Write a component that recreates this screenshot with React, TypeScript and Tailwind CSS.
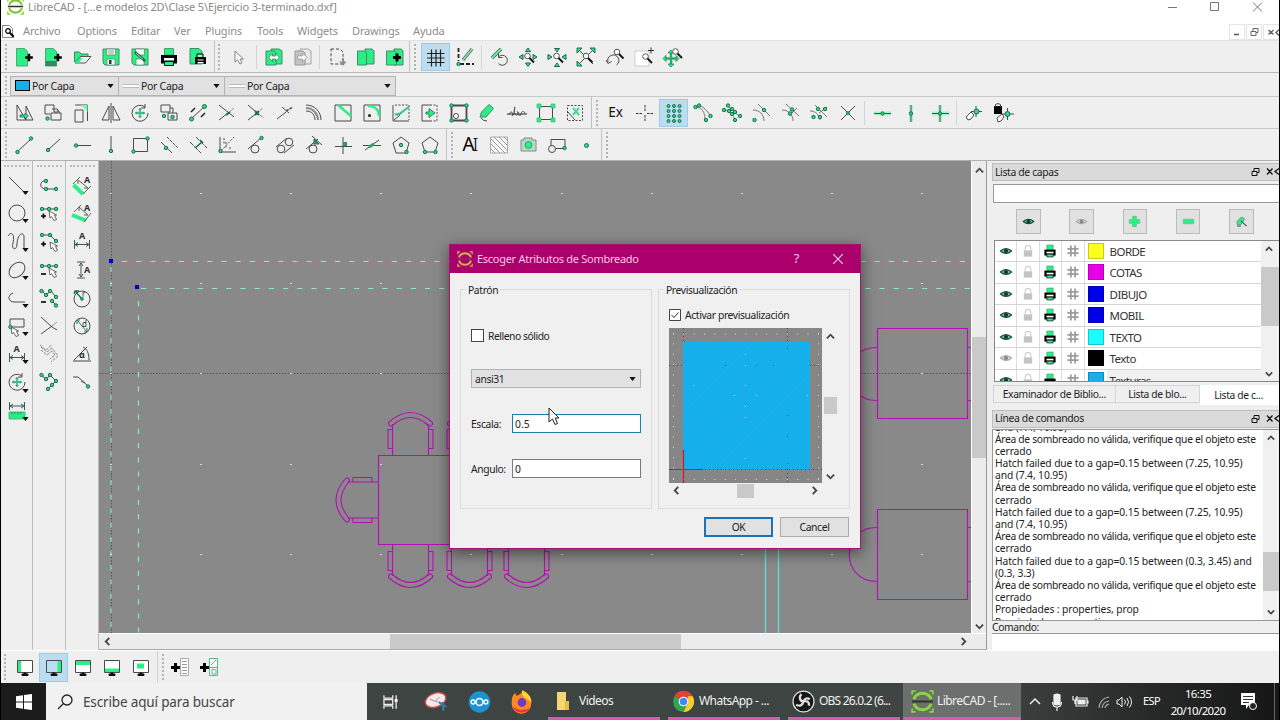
import { ReactNode } from "react";
import clsx from "clsx";

const G = "#2bef86";
const D = "#4a4a4a";

const Dot = ({ x, y, r = 1.7 }: { x: number; y: number; r?: number }) => (
  <circle cx={x} cy={y} r={r} fill="#35d985" stroke="#17714a" strokeWidth="1" />
);

interface LineProps {
  d: string;
  c?: string;
  w?: number;
  f?: string;
  dash?: string;
}

const Line = ({ d, c = D, w = 1, f = "none", dash }: LineProps) => (
  <path d={d} stroke={c} strokeWidth={w} fill={f} strokeDasharray={dash} />
);

const Plus = ({ x, y, r = 3.8, w = 2.4 }: { x: number; y: number; r?: number; w?: number }) => (
  <Line d={`M${x - r} ${y}h${2 * r}M${x} ${y - r}v${2 * r}`} c="#000" w={w} />
);

const Lens = ({ x, y }: { x: number; y: number }) => (
  <>
    <circle cx={x} cy={y} r="2.8" fill="#fff" stroke="#555" />
    <Line d={`M${x + 2} ${y + 2}l4.5 4.5`} c="#111" w={1.8} />
  </>
);

const Hand = ({ x, y }: { x: number; y: number }) => (
  <path
    transform={`translate(${x} ${y})`}
    d="M0 0l1 7 1.5-1.5 2.5 4 2.5-1-2-4.5h2z"
    fill="#fff"
    stroke="#555"
    strokeWidth=".9"
  />
);

const icons: Record<string, ReactNode> = {
  new: (
    <>
      <Line d="M2.500 1.500h8l3 3V19h-11z" c="#4fa878" f={G} />
      <Plus x={15} y={10.5} />
    </>
  ),
  template: (
    <>
      <Line d="M2.500 1.500h8l3 3V19h-11z" c="#4fa878" f={G} />
      <path d="M2.500 14h11v5h-11z" fill="#38885f" />
      <Plus x={15} y={10.5} />
    </>
  ),
  open: (
    <>
      <Line d="M2.500 15V5h5l1.500 2h7v3" c="#38885f" f={G} />
      <Line d="M3 16l5-6.500h11L13.500 16z" c="#555" f="#e9f5ee" />
      <path d="M3 16l5-6 2 1.500L7 16z" fill={G} />
    </>
  ),
  save: (
    <>
      <Line d="M2 2h16v16H4l-2-2z" c="#3d8f63" f={G} />
      <path d="M5.500 2h9v6h-9zM6 12h8v6H6z" fill="#fff" stroke="#5a8f73" strokeWidth=".8" />
      <Line d="M7 4h6M7 6h6" c="#777" w={0.8} />
      <path d="M8 13h2.500v4H8z" fill="#333" />
    </>
  ),
  saveAs: (
    <>
      <Line d="M2 2h16v16H4l-2-2z" c="#3d8f63" f={G} />
      <path d="M5.500 2h9v6h-9zM6 12h8v6H6z" fill="#fff" stroke="#5a8f73" strokeWidth=".8" />
      <Line d="M5 5l10 9" c="#2d5a45" w={2.400} />
      <Line d="M6 6l7 6.500" c="#8df5ba" w={1} />
    </>
  ),
  print: (
    <>
      <path d="M5.500 1.500h9V8h-9z" fill={G} stroke="#38a870" />
      <path d="M2 8h16v8.500H2z" fill="#000" />
      <path d="M5 11h10v2.500H5z" fill="#fff" />
      <path d="M5.500 14.500h9v4h-9z" fill={G} stroke="#111" />
    </>
  ),
  preview: (
    <>
      <Line d="M2 1.500h9l3 3V17H2z" c="#3d8f63" f={G} />
      <path d="M9 7h6v4H9z" fill="#8ff2b8" stroke="#000" />
      <path d="M7 10h11v7H7z" fill="#000" />
      <path d="M9.500 12.500h6v1h-6zM9.500 15h6v1.500h-6z" fill="#fff" />
    </>
  ),
  arrow: <Line d="M7 4v11l2.500-2.200L12 17l2-1-2-4h3.500z" c="#777" f="#fff" w={0.9} />,
  blockIn: (
    <>
      <Line d="M7 2h8l3 2v13H7z" c="#3d8f63" f={G} />
      <Line d="M2 4h8l2 2v12H2z" c="#3d8f63" f={G} />
      <path d="M4.500 10.500l4-4v2.500h3V6.500l4 4-4 4V12h-3v2.500z" fill="#fff" stroke="#3a7b5a" strokeWidth=".8" />
    </>
  ),
  blockOut: (
    <>
      <Line d="M7 2h8l3 2v13H7z" c="#a5a5a5" f="#e8e8e8" />
      <Line d="M2 4h8l2 2v12H2z" c="#999" f="#c2c2c2" />
      <path d="M4.500 9h5V6.500l5 4-5 4V12h-5z" fill="#fff" stroke="#999" strokeWidth=".8" />
    </>
  ),
  dashedDoc: (
    <>
      <Line d="M4 2h9l3 3v12H4z" dash="3 2" c="#444" />
      <Line d="M16 11v6M13 14.500l3 3 2.500-3" c="#888" w={1.6} />
    </>
  ),
  blocks: (
    <>
      <Line d="M9 2h7l2 2v13H9z" c="#3d8f63" f={G} />
      <Line d="M1.500 4h7l2 2v12h-9z" c="#3d8f63" f={G} />
    </>
  ),
  blockAdd: (
    <>
      <Line d="M9 2h7l2 2v14H9z" c="#3d8f63" f={G} />
      <Line d="M1.500 4h8l2 2v12h-10z" c="#3d8f63" f={G} />
      <Plus x={12} y={10.500} r={4} w={3} />
    </>
  ),
  grid: <Line d="M5.500 2.500v17M10 2.500v17M14.500 2.500v17M1 6.500h17.500M1 11h17.500M1 15.500h17.500" c="#222" w={1.2} />,
  draft: (
    <>
      <Line d="M3.500 1v13M5 17h14" c="#222" w={1.8} dash="4 2" />
      <Line d="M17 2L8 13" c="#555" w={3} />
      <Line d="M17 2L8 13" c="#7ff0b0" w={1.6} />
      <Dot x={3.500} y={17} />
    </>
  ),
  redraw: (
    <>
      <Line d="M12 2L3 11" c="#555" w={3.400} />
      <Line d="M12 2L3 11" c="#5ff0a0" w={2} />
      <Line d="M10 9.500a5 5 0 1 1-.5 7M9.500 6.500v4h4" />
    </>
  ),
  zoomIn: (
    <>
      <Lens x={9.500} y={9} />
      <path d="M10 1l2.500 3.500h-5zM10 19.500l2.500-3.500h-5zM1 10l4-2.500v5zM19 10l-4-2.500v5z" fill={G} stroke="#19553a" strokeWidth=".9" />
    </>
  ),
  zoomOut: (
    <>
      <Lens x={9.500} y={9} />
      <path d="M10 5L7.500 1.500h5zM10 16L7.500 19.500h5zM5 10L1 7.500v5zM15 10l4-2.500v5z" fill={G} stroke="#19553a" strokeWidth=".9" />
    </>
  ),
  zoomAuto: (
    <>
      <Line d="M3 3l14 14M17 3L3 17" />
      <path d="M1 1h5L1 6zM19 1h-5l5 5zM1 19h5l-5-5z" fill={G} stroke="#19553a" strokeWidth=".9" />
      <Lens x={10} y={9} />
    </>
  ),
  zoomPrev: (
    <>
      <Lens x={12} y={5} />
      <Line d="M3 15a5.500 5.500 0 1 1 8.500 3M1 13l2 3.500 3.500-2" />
    </>
  ),
  zoomWin: (
    <>
      <path d="M1 4h14v15H1z" fill="#fff" stroke="#ccc" />
      <Lens x={11.500} y={9.500} />
      <Line d="M14 3.500h6M17 .5v6" c="#333" />
    </>
  ),
  zoomPan: (
    <>
      <Line d="M8 5v13M1.500 11.500h13" c="#2aae6c" w={2.400} />
      <path d="M8 3l3 3H5zM8 20l3-3H5zM0 11.500l3-3v6zM16 11.500l-3-3v6z" fill={G} stroke="#19754a" strokeWidth=".7" />
      <Lens x={12.500} y={4.500} />
    </>
  ),
  move: (
    <>
      <Line d="M3 2v15h9zM12 3v14h7z" />
      <path d="M6 12h5v-2l3.500 3-3.500 3v-2H6z" fill={G} stroke="#19554a" strokeWidth=".7" />
    </>
  ),
  copyRotate: (
    <>
      <Line d="M2 2h9v7h4v-2M2 2v9h5M8 10h10v7H8z" />
      <Line d="M9 6l5 0 3 4" />
      <Dot x={4.500} y={15.500} />
    </>
  ),
  scale: (
    <>
      <Line d="M3 7h8v12H3zM3 2h12.500v16" />
      <path d="M9 2h6.500v7z" fill="#7ff3b2" />
    </>
  ),
  mirror: <Line d="M8 3v14H1zM12 3v14h7zM10 0v20" />,
  rotate: (
    <>
      <Line d="M15 4a8 8 0 1 0 3 6M15 1v4h-4" />
      <Line d="M10 5.500v9M5.500 10h9" c="#3fbe81" w={1.800} />
      <Line d="M8.500 7L10 5.500 11.500 7M8.500 13l1.500 1.500 1.500-1.500M7 8.500L5.500 10 7 11.500M13 8.500l1.500 1.500-1.500 1.500" c="#2a8a5b" w={0.800} />
    </>
  ),
  moveRotate: (
    <>
      <Line d="M2 2h9v7H2zM9 10h9v7H9zM11 5h3v5" />
      <Dot x={5} y={13} />
      <Dot x={13.500} y={14} />
    </>
  ),
  revert: (
    <>
      <Line d="M3 16L17 3" />
      <Line d="M3 9l4-4M13 14l4-4" c="#222" w={1.500} />
      <Dot x={3.500} y={16} r={2} />
      <Dot x={16.500} y={3.500} r={2} />
    </>
  ),
  trim: (
    <>
      <Line d="M2 2l15 12M2 17l9-7" />
      <Line d="M11 10l6-5" c="#999" />
      <Line d="M9 12l4-3" c="#19704a" w={2} />
    </>
  ),
  trim2: (
    <>
      <Line d="M2 2l7 6M2 17l9-7" />
      <Line d="M11 10l6-5M11 10l7 5" c="#888" dash="3 1" />
      <Line d="M9 8l4 4M9 12l4-4" c="#19704a" w={2} />
    </>
  ),
  lengthen: (
    <>
      <Line d="M2 16l9-7M7 4l7 6" />
      <Line d="M11 8l7-4" c="#555" dash="3 1" w={1.5} />
    </>
  ),
  offset: (
    <>
      <Line d="M2 2c9 0 15 7 15 15M2 8c6 0 9 4 9 9" />
      <Line d="M2 5c7 0 12 6 12 12" c="#8a8a8a" w={2} />
    </>
  ),
  bevel: (
    <>
      <Line d="M2 2h16v16H2z" />
      <Line d="M5 2l13 11" c={G} w={2.500} />
    </>
  ),
  fillet: (
    <>
      <Line d="M2 2h16v16H2z" />
      <Line d="M6 3c7 0 11 4 11 10" c={G} w={2.500} />
      <circle cx="7.500" cy="12.500" r="1.500" fill="#222" />
    </>
  ),
  divide: (
    <>
      <Line d="M2 2v16h16" />
      <Line d="M4 2h14v15" dash="2 1.500" />
      <Line d="M3 17l6-5" />
      <Line d="M4 11c5 2 7-3 14-7" c="#32c87d" w={2} />
    </>
  ),
  stretch: (
    <>
      <Line d="M10 2H2v16h8" />
      <Line d="M10 2h7v16h-7" dash="2 1.500" />
      <path d="M6 9h3V5.500l6 4.500-6 4.500V11H6z" fill={G} stroke="#19704a" strokeWidth=".8" />
    </>
  ),
  props: (
    <>
      <Line d="M2.500 2.500h15v15h-15z" w={1.800} />
      <circle cx="7" cy="13" r="2.500" fill="#fff" stroke={D} />
      <Dot x={2.500} y={2.500} />
      <Dot x={17.500} y={2.500} />
      <Dot x={2.500} y={17.500} />
      <Dot x={17.500} y={17.500} />
    </>
  ),
  attrs: (
    <>
      <path d="M2 14l1.500-5L11 1.500l4.500 4L8 14z" fill={G} stroke="#368b60" />
      <Line d="M3 15q2 3 6 3" />
    </>
  ),
  abc: (
    <>
      <Line d="M2 12c1-5 5-3 3 1 3-1 2-10 3-9-1 4-1 9 2 8 2-3-1-4 1-3 2 3-1 4 3 3 0-5 4-4 4-1" c="#555" />
      <Line d="M0 11h20" c="#333" />
    </>
  ),
  explode: (
    <>
      <Line d="M3.500 3.500h13v13h-13z" />
      {[3, 17].map((x) => [3, 17].map((y) => <path key={`${x}${y}`} d={`M${x - 2} ${y - 2}h4v4h-4z`} fill={G} stroke="#35bd76" strokeWidth=".7" />))}
    </>
  ),
  del: (
    <>
      <Line d="M2.500 2.500h15v15h-15z" dash="2 1.500" />
      <Line d="M8 5l6 7M14 5l-6 7" c="#41df8a" w={2} />
      <Line d="M3 9l7 8" />
    </>
  ),
  snapFree: <Line d="M10 2v7M10 12v7M1 10.500h7M12 10.500h7" dash="2.500 1" c="#333" />,
  snapGrid: (
    <>
      {[4.500, 10, 15.500].map((x) => [3, 8, 13, 18].map((y) => <Dot key={`${x}-${y}`} x={x} y={y} r={1.500} />))}
    </>
  ),
  snapEnd: (
    <>
      <Line d="M3 4c6 0 9 6 9 12M6 2c5 2 8 6 11 10" c="#777" />
      <Dot x={2.500} y={4} />
      <Dot x={6} y={2.500} />
      <Dot x={13} y={17} />
      <Dot x={17.500} y={13} />
    </>
  ),
  snapEntity: (
    <>
      <Line d="M2 7c6 0 9 5 11 10M6 3l11 10" c="#777" />
      {[[2, 7], [6, 2.500], [7, 8], [10, 6], [10, 11], [13, 9], [13, 17], [18, 13]].map(([x, y]) => <Dot key={`${x}-${y}`} x={x} y={y} />)}
    </>
  ),
  snapCenter: (
    <>
      <Line d="M2 7c6 0 11 4 11 11M7 1l12 12" c="#777" />
      <Dot x={13} y={7} />
      <Dot x={3.500} y={17} />
    </>
  ),
  snapMid: (
    <>
      <Line d="M2 7c6 0 11 4 11 11M6 1l13 12M17 5l-8 8" c="#777" />
      <Dot x={12} y={6.500} />
      <Dot x={10} y={10.500} />
    </>
  ),
  snapDist: (
    <>
      <Line d="M1 8c6 0 9 4 10 9M6 2l12 12M18 4l-8 6" c="#777" />
      <Dot x={9} y={6} />
      <Dot x={16} y={6} />
      <Dot x={4.500} y={14} />
      <Dot x={11} y={14} />
    </>
  ),
  snapInt: (
    <>
      <Line d="M3 3l14 14M17 3L3 17" />
      <Dot x={10} y={10} r={1.300} />
    </>
  ),
  resH: (
    <>
      <Line d="M2 10.500h17" c="#a5f5c8" w={4} />
      <Line d="M2 10.500h17" />
      <Dot x={10.500} y={10.500} />
    </>
  ),
  resV: (
    <>
      <Line d="M10 2v17" c="#a5f5c8" w={4} />
      <Line d="M10 2v17" />
      <Dot x={10} y={10.500} />
    </>
  ),
  resO: (
    <>
      <Line d="M10 2v17M2 10.500h17" c="#a5f5c8" w={4} />
      <Line d="M10 2v17M2 10.500h17" />
      <Dot x={10} y={10.500} />
    </>
  ),
  relZero: (
    <>
      <path d="M2 14l5-5 3 3-3 4-3 1z" fill="#fff" stroke={D} />
      <Line d="M12 3v11M7 8.500h11" />
      <Dot x={12.500} y={8.500} r={2.500} />
    </>
  ),
  lockZero: (
    <>
      <path d="M1 3h8v8H1z" fill="#000" />
      <Line d="M2.500 4V1.500q2.500-2 5 0V4" />
      <path d="M4 15l5-4 2 3-3 4-3 1z" fill="#fff" stroke={D} />
      <Line d="M14.500 5v12M9 11h12" />
      <Dot x={14.500} y={11} r={2.500} />
    </>
  ),
  line2p: (
    <>
      <Line d="M4 16L17 4" />
      <Dot x={3.500} y={17} />
      <Dot x={17} y={3.500} />
    </>
  ),
  lineAng: (
    <>
      <Line d="M5 15L17 4" />
      <Dot x={5} y={15} />
    </>
  ),
  lineH: (
    <>
      <Line d="M4 10.500h15" />
      <Dot x={4} y={10.500} />
    </>
  ),
  lineV: (
    <>
      <Line d="M10 1v15" />
      <Dot x={10} y={16} />
    </>
  ),
  rect: (
    <>
      <Line d="M3.500 3.500h14v13h-14z" />
      <Dot x={3.500} y={16.500} />
      <Dot x={17.500} y={3.500} />
    </>
  ),
  parallel: (
    <>
      <Line d="M2 7l11 11" />
      <Line d="M8 2l11 11" dash="3 1" />
      <Dot x={7} y={13} />
    </>
  ),
  parallel2: (
    <>
      <Line d="M2 7l11 11M8 2l11 11" dash="5 1" />
      <Line d="M7 13l7-6M12 5l3 3" c="#18704a" w={1.600} />
    </>
  ),
  bisector: (
    <>
      <Line d="M3 2v15h16" />
      <Line d="M4 16L17 2M7 3v6M9 7v6M13 12v3" dash="2 1.500" />
      <Dot x={3.500} y={16} />
    </>
  ),
  tangent: (
    <>
      <circle cx="9" cy="14" r="4" fill="none" stroke={D} />
      <Line d="M2 14L15 3" />
      <Dot x={15.500} y={3} />
    </>
  ),
  tangent2: (
    <>
      <circle cx="6" cy="14" r="3.800" fill="none" stroke={D} />
      <circle cx="14" cy="7" r="3.800" fill="none" stroke={D} />
      <Line d="M1 12L12 3M9 18l10-8" />
    </>
  ),
  tangent3: (
    <>
      <circle cx="9" cy="14" r="4" fill="none" stroke={D} />
      <Line d="M2 14l12-10M8 1l10 9" />
      <Line d="M10 4v5h5z" c="#18704a" f="#3d9b70" />
    </>
  ),
  perp: (
    <>
      <Line d="M2 11.500h17M10 2v17" />
      <path d="M10 7h4v4h-4z" fill="#2f9a68" />
    </>
  ),
  relAngle: (
    <>
      <Line d="M1 10.500h18M3 15L17 5" />
      <Line d="M7 12l5-3" c="#2ba367" w={3} />
    </>
  ),
  polyC: (
    <>
      <Line d="M10 2l8 6-3 10H5L2 8z" />
      <Dot x={10} y={10} />
      <Dot x={15.500} y={17} />
    </>
  ),
  poly: (
    <>
      <Line d="M10 2l8 6-3 9H5L2 8z" />
      <Dot x={5} y={17} />
      <Dot x={15.500} y={17} />
    </>
  ),
  hatch: (
    <>
      <path d="M1.500 2h17v16h-17z" fill="#f6f6f6" stroke="#aaa" />
      <Line d="M2 14l4 4M2 9l9 9M2 4l14 14M5 2l13 13M10 2l8 8M15 2l3 3" c="#999" />
    </>
  ),
  image: (
    <>
      <path d="M3 5h3V3h8v2h4v11H3z" fill="#b9d9c7" stroke="#888" />
      <circle cx="10.500" cy="10" r="3.500" fill={G} stroke="#2aa86a" />
    </>
  ),
  insert: (
    <>
      <Line d="M4 11V4.500h14v9H9" />
      <circle cx="5" cy="14" r="3.500" fill="#eee" stroke={D} />
      <Dot x={17.500} y={13} />
    </>
  ),
  point: <Dot x={10.500} y={10.500} r={2} />,
  cLine: <Line d="M2 2l17 17" />,
  cCircle: <circle cx="10" cy="10" r="8" fill="none" stroke={D} />,
  cCurve: <Line d="M1 5c4-6 7 0 5 7s4 8 4 1 5-14 7-8v13" />,
  cEllipse: <ellipse cx="10" cy="10" rx="9" ry="6.500" transform="rotate(-42 10 10)" fill="none" stroke={D} />,
  cPoly: <Line d="M6 5c-6 2-5 9 1 9h11" />,
  cSelect: (
    <>
      <Line d="M3 3h14v8H3z" />
      <Hand x={4} y={11} />
      <Dot x={3.500} y={11} />
    </>
  ),
  dimA: (
    <>
      <Line d="M2.500 9v9M17.500 9v9M3 13.500h14M6 11.500l-3 2 3 2M14 11.500l3 2-3 2" c="#3c5b4c" />
    </>
  ),
  dimV: <Line d="M5 2h8M5 18h8M9 3v14M7 6l2-3 2 3M7 14l2 3 2-3" c="#3c5b4c" />,
  measure: (
    <>
      <Line d="M2.500 1v8M17.500 1v8M3 5h14M6 3L3 5l3 2M14 3l3 2-3 2" c="#3c5b4c" />
      <path d="M2 11h16v7H2z" fill={G} stroke="#2fb873" strokeWidth=".8" />
      <Line d="M5 11v2.500M8 11v2M11 11v2.500M14 11v2" c="#27754e" w={0.800} />
    </>
  ),
  pline: (
    <>
      <Line d="M7 5c-7 1-7 9 0 9h10" />
      <Dot x={7} y={6} />
      <Dot x={7} y={14} />
      <Dot x={17} y={14} />
    </>
  ),
  nodeAdd: (
    <>
      <Line d="M3 6h14" />
      <Dot x={3} y={6} />
      <Dot x={10} y={6} />
      <Dot x={17} y={6} />
      <Hand x={10} y={8} />
      <Plus x={4.500} y={13} r={2.500} w={1.600} />
    </>
  ),
  nodeApp: (
    <>
      <Line d="M3 4h8l6 6" />
      <Dot x={3} y={4} />
      <Dot x={11} y={4} />
      <Dot x={17} y={10} />
      <Hand x={11} y={11} />
      <Plus x={4.500} y={13} r={2.500} w={1.600} />
    </>
  ),
  nodeDel: (
    <>
      <Line d="M3 6h14" />
      <Dot x={3} y={6} />
      <Dot x={10} y={6} />
      <Dot x={17} y={6} />
      <Hand x={10} y={8} />
      <Line d="M2 14h5" c="#000" w={1.600} />
    </>
  ),
  nodeSeg: (
    <>
      <Line d="M3 3l4 4 5-4 5 6M13 13l4 4" />
      {[[2.500, 3], [7, 7], [11, 3], [17, 9], [13, 13], [17, 17.500]].map(([x, y]) => <Dot key={x + y} x={x} y={y} />)}
      <Line d="M2 14h5" c="#000" w={1.600} />
    </>
  ),
  nodeTrim: (
    <>
      <Line d="M2 1l11 10 5 3M2 18l11-8" />
      <Line d="M13 10l5-4" c="#999" />
    </>
  ),
  nodePar: <Line d="M2 3l6 5 5-4 6 8-7 6M2 6l6 5 5-4 3 4-5 4M1 1l6 5 6-5" c="#888" dash="3 1" />,
  nodeOut: (
    <>
      <Line d="M3 3l4 5 4-5 6 6-8 8" />
      {[[2.500, 3], [7, 7], [11, 3], [17, 9], [13, 13], [9, 17]].map(([x, y]) => <Dot key={x + y} x={x} y={y} />)}
    </>
  ),
  dimAl: (
    <>
      <Line d="M1.500 10l9.500 9" c={G} w={4} />
      <Line d="M1 9l7-7M11 19l8-8M6 5l10 8M6 5v4M16 13h-4" c="#4d6b5c" />
    </>
  ),
  dimLin: (
    <>
      <Line d="M0 12l14 5.500" c={G} w={4} />
      <Line d="M2 9l7-7M12 19l7-9M7 4l9 8M7 4v4M16 12h-4" c="#4d6b5c" />
    </>
  ),
  dimRad: (
    <>
      <circle cx="10" cy="11" r="8" fill="none" stroke={D} />
      <Line d="M10 11L3 3M2 6l1-3 4 0" c="#18704a" w={1.300} />
      <Dot x={10} y={11} r={1.300} />
    </>
  ),
  dimDia: (
    <>
      <circle cx="10" cy="10" r="8" fill="none" stroke={D} />
      <Line d="M5 4l10 12M5 8V4h3M15 12v4h-3" c="#2a7d58" />
    </>
  ),
  dimAng: (
    <>
      <Line d="M1 17h18M2 16L15 3M11 3c4 2 6 6 6 13" c="#335243" />
    </>
  ),
  leader: (
    <>
      <Line d="M1 5h5l10 9M9 9l4 2" />
      <Dot x={16} y={14.500} />
    </>
  ),
  eye: (
    <>
      <path d="M2 10q8-7 16 0-8 7-16 0z" fill="#5fd49a" stroke="#1a4632" strokeWidth="1.600" />
      <circle cx="10" cy="10" r="3" fill="#123b28" />
    </>
  ),
  eyeOff: (
    <>
      <path d="M2 10q8-7 16 0-8 7-16 0z" fill="#ddd" stroke="#aaa" strokeWidth="1.600" />
      <circle cx="10" cy="10" r="3" fill="#888" />
    </>
  ),
  add: <path d="M7 2h6v5h5v6h-5v5H7v-5H2V7h5z" fill={G} stroke="#6bb88d" />,
  remove: <path d="M2 6.500h16v7H2z" fill={G} stroke="#6bb88d" />,
  edit: (
    <>
      <path d="M3 10l7-7 5 3-6 9H4z" fill={G} stroke="#368b60" />
      <Line d="M9 9l9 8M3 17h6" w={1.600} />
    </>
  ),
  lock: (
    <>
      <path d="M4 9h12v9H4z" fill="#c4c4c4" />
      <Line d="M6 9V6q0-4 4-4t4 4v3" c="#cfcfcf" w={1.600} />
    </>
  ),
  hash: <Line d="M7 2v16M13 2v16M2 7h16M2 13h16" c="#9c9c9c" w={2.500} />,
};

const Icon = ({ name, className = "size-5" }: { name: string; className?: string }) => (
  <svg viewBox="0 0 20 20" className={clsx("block shrink-0 overflow-visible", className)}>
    {icons[name]}
  </svg>
);

const Grip = () => <div className="h-[26px] w-[3px] shrink-0 border-l-2 border-dotted border-[#b4b4b4]" />;
const Sep = () => <div className="mx-[2px] h-[24px] w-px shrink-0 bg-[#d4d4d4]" />;
const Edge = () => <div className="h-full w-px shrink-0 bg-[#c2c2c2]" />;

const Tool = ({ name, active }: { name: string; active?: boolean }) => (
  <div
    className={clsx(
      "flex h-[28px] w-[29px] shrink-0 items-center justify-center",
      active && "border border-[#9fcbe8] bg-[#bcdcf0]"
    )}
  >
    {name === "ex" && <span className="text-[13.500px] text-[#111]">Ex</span>}
    {name === "text" && <span className="text-[19px] leading-none tracking-[-2px] text-black">A<span className="font-light">I</span></span>}
    {icons[name] && <Icon name={name} />}
  </div>
);

const Tools = ({ names, active }: { names: string; active?: string }) => (
  <>
    {names.split(" ").map((n) => (
      <Tool key={n} name={n} active={n === active} />
    ))}
  </>
);

const CadLogo = ({ className, color = "#7fc832", bar = "#333" }: { className?: string; color?: string; bar?: string }) => (
  <svg viewBox="0 0 20 20" className={clsx("block shrink-0", className)}>
    <path d="M1 4V1h3M16 1h3v3M19 16v3h-3M4 19H1v-3" stroke={color} strokeWidth="1.500" fill="none" />
    <path d="M2.500 8a8 8 0 0 1 15 0M2.500 12a8 8 0 0 0 15 0" stroke={color} strokeWidth="2.500" fill="none" />
    <path d="M1 10h18" stroke={bar} strokeWidth="1.800" />
  </svg>
);

const Chevron = ({ dir, className = "size-[9px]" }: { dir: "up" | "down" | "left" | "right"; className?: string }) => {
  const d = { up: "M1 7l4-4 4 4", down: "M1 3l4 4 4-4", left: "M7 1L3 5l4 4", right: "M3 1l4 4-4 4" }[dir];
  return (
    <svg viewBox="0 0 10 10" className={clsx("block shrink-0", className)}>
      <path d={d} fill="none" stroke="#444" strokeWidth="2" />
    </svg>
  );
};

const Caret = ({ className }: { className?: string }) => (
  <svg viewBox="0 0 8 5" className={clsx("block h-[4px] w-[7px] shrink-0", className)}>
    <path d="M0 0h8L4 5z" fill="#111" />
  </svg>
);

const menus = [
  ["Archivo", "w-[54px]"],
  ["Options", "w-[54px]"],
  ["Editar", "w-[43px]"],
  ["Ver", "w-[31px]"],
  ["Plugins", "w-[52px]"],
  ["Tools", "w-[40px]"],
  ["Widgets", "w-[55px]"],
  ["Drawings", "w-[61px]"],
  ["Ayuda", "w-[50px]"],
];

const TitleBar = () => (
  <div className="flex h-[21px] shrink-0 items-start bg-white pl-[6px] text-[#8a8a8a]">
    <CadLogo className="-mt-[2px] h-[17px] w-[17px]" />
    <span className="ml-[4px] text-[11px] leading-[14px] tracking-[-0.150px] whitespace-nowrap">
      LibreCAD - [...e modelos 2D\Clase 5\Ejercicio 3-terminado.dxf]
    </span>
    <svg viewBox="0 0 100 14" className="mr-[15px] ml-auto h-[14px] w-[100px]" fill="none" stroke="#777">
      <path d="M4 7.500h9M46.500 2.500h8v8h-8zM89 2.500l9 9M98 2.500l-9 9" />
    </svg>
  </div>
);

const MenuBar = () => (
  <div className="flex h-[20px] shrink-0 items-center border-b border-[#e2e2e2] bg-white pt-[2px] text-[11px] tracking-[-0.150px] text-[#8c8c8c]">
    <svg viewBox="0 0 12 13" className="ml-[1px] h-[13px] w-[12px]">
      <path d="M.5.500h7l3 3v9H.5z" fill="#fff" stroke="#888" />
      <circle cx="6" cy="6" r="2.300" fill="none" stroke="#000" strokeWidth="1.200" />
      <path d="M8 8l4 4" stroke="#000" strokeWidth="2" />
    </svg>
    <div className="ml-[9px] flex">
      {menus.map(([label, width]) => (
        <span key={label} className={width}>{label}</span>
      ))}
    </div>
    <svg viewBox="0 0 50 16" className="ml-auto h-[16px] w-[50px]" fill="none" stroke="#e4e4e4">
      <path d="M.5.500h15v15H.5zM17.500.500h15v15h-15zM34.500.500h16v15h-16z" />
      <path d="M5 10.500h5" stroke="#555" strokeWidth="1.500" />
      <path d="M22 7.500h5v4h-5zM24 7V4.500h5v4h-2" stroke="#666" />
      <path d="M39.500 6l5 4.500M44.500 6l-5 4.500M50 5.500l-3 3 3 3" stroke="#666" strokeWidth="1.500" />
    </svg>
  </div>
);

const Combo = ({ className, swatch }: { className: string; swatch?: boolean }) => (
  <div className={clsx("flex h-[20px] items-center border border-[#b3b3b3] bg-[#e1e1e1] pr-[4px]", className)}>
    {swatch ? (
      <span className="ml-[4px] h-[11px] w-[15px] border border-black bg-[#17aeea]" />
    ) : (
      <span className="ml-[4px] h-[4px] w-[16px] border-y border-[#bbb] bg-white" />
    )}
    <span className="ml-[2px] pt-[2px] text-[10.500px] tracking-[-0.300px] text-[#222]">Por Capa</span>
    <Caret className="ml-auto" />
  </div>
);

const Toolbars = () => (
  <div className="shrink-0">
    <div className="flex h-[32px] items-center border-b border-[#b8b8b8] pl-[4px]">
      <Grip />
      <div className="ml-[1px] flex items-center">
        <Tools names="new template open save saveAs print preview" />
      </div>
      <div className="ml-[2px] h-full w-px bg-[#c2c2c2]" />
      <div className="ml-[3px]"><Grip /></div>
      <div className="ml-[2px] flex items-center">
        <Tools names="arrow" />
        <div className="w-[2px]" />
        <Sep />
        <Tools names="blockIn blockOut" />
        <Sep />
        <Tools names="dashedDoc blocks blockAdd" />
      </div>
      <Edge />
      <div className="ml-[4px]"><Grip /></div>
      <div className="ml-[4px] flex items-center">
        <Tools names="grid draft" active="grid" />
        <Sep />
        <Tools names="redraw zoomIn zoomOut zoomAuto zoomPrev zoomWin zoomPan" />
      </div>
    </div>
    <div className="flex h-[24px] items-center border-b border-[#c8c8c8] pt-[2px] pl-[4px]">
      <div className="h-[20px] overflow-hidden"><Grip /></div>
      <Combo swatch className="ml-[2px] w-[109px]" />
      <Combo className="-ml-px w-[107px]" />
      <Combo className="-ml-px w-[172px]" />
    </div>
    <div className="flex h-[32px] items-center border-b border-[#c8c8c8] pl-[4px]">
      <Grip />
      <div className="ml-[1px] flex items-center">
        <Tools names="move copyRotate scale mirror rotate moveRotate revert trim trim2 lengthen offset bevel fillet divide stretch props attrs abc explode del" />
      </div>
      <div className="ml-[2px] h-full w-px bg-[#c2c2c2]" />
      <div className="ml-[4px]"><Grip /></div>
      <div className="ml-[2px] flex items-center">
        <Tools names="ex snapFree snapGrid snapEnd snapEntity snapCenter snapMid snapDist snapInt" active="snapGrid" />
        <Sep />
        <Tools names="resH resV resO" />
        <Sep />
        <Tools names="relZero lockZero" />
      </div>
    </div>
    <div className="flex h-[32px] items-center border-b border-[#b0b0b0] pl-[4px]">
      <Grip />
      <div className="ml-[1px] flex items-center">
        <Tools names="line2p lineAng lineH lineV rect parallel parallel2 bisector tangent tangent2 tangent3 perp relAngle polyC poly" />
      </div>
      <div className="ml-[2px] h-full w-px bg-[#c2c2c2]" />
      <div className="ml-[4px]"><Grip /></div>
      <div className="ml-[1px] flex items-center">
        <Tools names="text hatch image insert point" />
      </div>
      <div className="ml-[1px] h-full w-px bg-[#c2c2c2]" />
      <div className="ml-[4px]"><Grip /></div>
    </div>
  </div>
);

const sideLetters: Record<string, [string, string]> = {
  dimA: ["A", "left-[7px] top-0 text-[9px] font-bold"],
  dimV: ["A", "left-[12px] top-[5px] text-[9px] font-bold"],
  dimAl: ["A", "left-[12px] top-0 text-[9px] font-bold"],
  dimLin: ["A", "left-[12px] top-0 text-[9px] font-bold"],
  dimRad: ["r", "left-[10px] top-[1px] text-[8px]"],
  dimDia: ["d", "left-[10px] top-[3px] text-[8px]"],
  dimAng: ["α", "left-[7px] top-[6px] text-[9px] font-bold"],
};

const SideColumn = ({ names, carets, className }: { names: string; carets?: boolean; className: string }) => (
  <div className={clsx("flex shrink-0 flex-col items-center border-r border-[#bcbcbc] pt-[4px]", className)}>
    <div className="mb-[4px] h-[2px] w-[25px] border-t-2 border-dotted border-[#bbb]" />
    {names.split(" ").map((n) => (
      <div key={n} className="relative flex h-[28.2px] w-[20px] shrink-0 items-center justify-center">
        <div className="relative">
          <Icon name={n} className="size-[20px]" />
          {sideLetters[n] && (
            <span className={clsx("absolute leading-[9px] text-[#333]", sideLetters[n][1])}>
              {sideLetters[n][0]}
            </span>
          )}
        </div>
        {carets && <Caret className="absolute -right-[2px] bottom-[4px] w-[5px]" />}
      </div>
    ))}
  </div>
);

const Chair = ({ transform }: { transform: string }) => (
  <g transform={transform}>
    <path d="M-18-31V0M18-31V0M-22.500-25.500h4.500v19h-4.500zM22.500-25.500H18v19h4.500z" />
    <path d="M-22-32.500Q0-52.500 22-32.500v2q-2 2.500-4 1Q0-45.500-18-29.500q-2 1.500-4-1z" />
  </g>
);

const gridX = [111, 201, 291, 381, 471, 562, 652, 742, 832, 922];
const gridY = [193, 283, 373, 464, 554];

const Drawing = () => (
  <svg viewBox="99 161 872 472" className="block h-[472px] w-[872px] bg-[#898989]" fill="none">
    <g stroke="#555" strokeDasharray="1.500 1.500">
      <path d="M111.500 161v472M99 373.500h872" />
    </g>
    <g stroke="#84f0b2" strokeWidth="1.200" strokeDasharray="5.200 9">
      <path d="M122 261.500h849M141 288.500h830M111 267v367" />
      <path d="M138.500 301v333" />
    </g>
    {gridX.map((x) => gridY.map((y) => <path key={`${x}-${y}`} d={`M${x - 1} ${y + 0.500}h2`} stroke="#d8d8d8" />))}
    <path d="M109 259h4v4h-4zM135 285h4v4h-4z" fill="#0000c8" />
    <g stroke="#b40fb4" strokeWidth="1.100">
      <path d="M378.500 455.500h190v89h-190z" />
      <Chair transform="translate(410.500 455)" />
      <Chair transform="translate(469.500 455)" />
      <Chair transform="translate(410.500 545) scale(1 -1)" />
      <Chair transform="translate(469.500 545) scale(1 -1)" />
      <Chair transform="translate(526.500 545) scale(1 -1)" />
      <Chair transform="translate(378.500 500) rotate(-90)" />
      <path d="M877.500 328.500h90v90h-90zM877.500 509.500h90v90h-90z" />
      <path d="M877 347.500C840 347 840 401 877 400.500M877 527.500C840 527 840 582 877 581.500" />
      <path d="M967 347.500h4M967 400.500h4M967 527.500h4M967 581.500h4" />
    </g>
    <path d="M765.500 540v94M778.500 540v94" stroke="#5fe0d4" strokeWidth="1.300" />
  </svg>
);

const Canvas = () => (
  <div className="flex w-[888px] shrink-0 flex-col border-r border-[#999]">
    <div className="flex h-[472px]">
      <Drawing />
      <div className="flex w-[15px] flex-col items-center border-l border-white bg-[#ececec]">
        <Chevron dir="up" className="mt-[5px] size-[9px]" />
        <div className="mt-[162px] h-[121px] w-full bg-[#c9c9c9]" />
        <Chevron dir="down" className="mt-auto mb-[2px] size-[9px]" />
      </div>
    </div>
    <div className="flex h-[17px] items-center border-y border-t-white border-b-[#aaa] bg-[#ececec]">
      <Chevron dir="left" className="ml-[4px] size-[9px]" />
      <div className="ml-[278px] h-full w-[291px] bg-[#c9c9c9]" />
      <Chevron dir="right" className="ml-[278px] size-[9px]" />
    </div>
  </div>
);

const DockHeader = ({ title }: { title: string }) => (
  <div className="flex h-[18px] shrink-0 items-center border border-r-0 border-[#bdbdbd] bg-[#dadada] pl-[2px]">
    <span className="pt-px text-[10.400px] tracking-[-0.350px] text-[#222]">{title}</span>
    <svg viewBox="0 0 28 12" className="ml-auto h-[12px] w-[28px]" fill="none" stroke="#111">
      <path d="M1 5.500h5v4H1zM3 5V2.500h5v4H6" />
      <path d="M16 2.500l5.500 6M21.500 2.500L16 8.500M28 2.500l-4 3 4 3" strokeWidth="1.300" />
    </svg>
  </div>
);

const layers = [
  { name: "BORDE", color: "bg-[#fbff1c]", eye: "eye" },
  { name: "COTAS", color: "bg-[#e800e8]", eye: "eye" },
  { name: "DIBUJO", color: "bg-[#0000e8]", eye: "eye" },
  { name: "MOBIL", color: "bg-[#0000e8]", eye: "eye" },
  { name: "TEXTO", color: "bg-[#1cfbff]", eye: "eye" },
  { name: "Texto", color: "bg-black", eye: "eyeOff" },
  { name: "Texturas", color: "bg-[#17aeea]", eye: "eye" },
];

const log = [
  "and (7.4, 10.95)",
  "Área de sombreado no válida, verifique que el objeto este",
  "cerrado",
  "Hatch failed due to a gap=0.15 between (7.25, 10.95)",
  "and (7.4, 10.95)",
  "Área de sombreado no válida, verifique que el objeto este",
  "cerrado",
  "Hatch failed due to a gap=0.15 between (7.25, 10.95)",
  "and (7.4, 10.95)",
  "Área de sombreado no válida, verifique que el objeto este",
  "cerrado",
  "Hatch failed due to a gap=0.15 between (0.3, 3.45) and",
  "(0.3, 3.3)",
  "Área de sombreado no válida, verifique que el objeto este",
  "cerrado",
  "Propiedades : properties, prop",
  "Propiedades : properties",
];

const Docks = () => (
  <div className="ml-[5px] flex min-w-0 flex-1 flex-col overflow-hidden pt-[2px]">
    <DockHeader title="Lista de capas" />
    <div className="mt-[3px] ml-[1px] h-[19px] shrink-0 border border-r-0 border-[#999] bg-white" />
    <div className="mt-[6px] flex shrink-0 gap-[28.800px] pl-[24px]">
      {["eye", "eyeOff", "add", "remove", "edit"].map((n) => (
        <div key={n} className="flex size-[24.500px] shrink-0 items-center justify-center border border-[#bcbcbc] bg-[#e1e1e1]">
          <Icon name={n} className="size-[13px]" />
        </div>
      ))}
    </div>
    <div className="mt-[6px] ml-[2px] flex h-[142px] shrink-0 border border-r-0 border-[#888] bg-white">
      <div className="w-[266px] overflow-hidden">
        {layers.map((l) => (
          <div key={l.name} className={clsx("flex h-[21.500px] border-b border-[#d4d4d4]", l.name === "Texturas" && "bg-[#f0f0f0]")}>
            {[l.eye, "lock", "print", "hash"].map((n) => (
              <div key={n} className="flex w-[22.400px] items-center justify-center border-r border-[#dcdcdc] bg-white">
                <Icon name={n} className="size-[14px]" />
              </div>
            ))}
            <div className="flex w-[22px] items-center justify-center bg-white">
              <span className={clsx("size-[16px] border border-black/20", l.color)} />
            </div>
            <span className="ml-[3px] text-[11.500px] leading-[21px] tracking-[-0.550px] text-[#333]">{l.name}</span>
          </div>
        ))}
      </div>
      <div className="flex flex-1 flex-col items-center bg-[#f0f0f0]">
        <Chevron dir="up" className="mt-[4px] mr-[2px] size-[8px]" />
        <div className="mt-[14px] h-[59px] w-full bg-[#c9c9c9]" />
        <Chevron dir="down" className="mt-auto mr-[2px] mb-[3px] size-[8px]" />
      </div>
    </div>
    <div className="mt-[3px] flex h-[20px] shrink-0 pl-[1px] text-[10.300px] tracking-[-0.350px] whitespace-nowrap text-[#222]">
      <div className="h-[18px] w-[123px] border border-[#d4d4d4] text-center leading-[17px]">Examinador de Biblio...</div>
      <div className="h-[18px] w-[85px] border border-l-0 border-[#d4d4d4] text-center leading-[17px]">Lista de blo...</div>
      <div className="w-[79px] bg-white pl-[14px] leading-[20px]">Lista de c...</div>
    </div>
    <div className="mt-[5px]"><DockHeader title="Línea de comandos" /></div>
    <div className="mt-[1px] flex h-[192px] shrink-0 overflow-hidden border border-r-0 border-[#999] bg-white">
      <div className="-mt-[9px] w-[270px] pl-[2px] text-[10.300px] leading-[12.180px] whitespace-nowrap text-[#222]">
        {log.map((line, i) => (
          <div key={i} className={line.startsWith("Área") ? "tracking-[-0.310px]" : "tracking-[-0.110px]"}>
            {line}
          </div>
        ))}
      </div>
      <div className="flex flex-1 flex-col items-center bg-[#f0f0f0]">
        <Chevron dir="up" className="mt-[4px] size-[8px]" />
        <div className="mt-[110px] h-[39px] w-full bg-[#c9c9c9]" />
        <Chevron dir="down" className="mt-auto mb-[4px] size-[8px]" />
      </div>
    </div>
    <div className="h-[12px] shrink-0 text-[10.300px] leading-[12px] tracking-[-0.350px] text-[#222]">Comando:</div>
    <div className="flex-1 border-t border-[#999] bg-white" />
  </div>
);

const Monitor = ({ d, active }: { d: string; active?: boolean }) => (
  <div className={clsx("flex h-[29px] w-[29px] items-center justify-center", active && "border border-[#9fcbe8] bg-[#bcdcf0]")}>
    <svg viewBox="0 0 18 18" className="size-[18px]">
      <path d="M1.500 2.500h15v12h-15z" fill={active ? "#bcdcf0" : "#fff"} />
      <path d={d} fill={G} />
      <path d="M1.500 2.500h15v12h-15z" fill="none" stroke={D} />
      <path d="M8 15h2v1.500H8zM6 16h6v1.500H6z" fill="#111" stroke="#111" />
    </svg>
  </div>
);

const BottomBar = () => (
  <div className="flex h-[33px] shrink-0 items-center border-t border-white pl-[3px]">
    <Grip />
    <div className="ml-[3px] flex">
      <Monitor d="M2 3h3v11H2z" />
      <Monitor d="M12.500 3h3.500v11h-3.500z" active />
      <Monitor d="M2 3h14v4H2z" />
      <Monitor d="M2 10.500h14V14H2z" />
      <Monitor d="M5 5.500h7v5H5z" />
    </div>
    <div className="ml-[2px] h-full w-px bg-[#cfcfcf]" />
    <div className="ml-[4px]"><Grip /></div>
    <svg viewBox="0 0 50 20" className="ml-[5px] h-[20px] w-[50px]" fill="none">
      <path d="M1 10.500h9M5.500 6v9M30 10.500h9M34.500 6v9" stroke="#000" strokeWidth="3" />
      <path d="M10.500 1.500h8v17h-8z" fill="#fff" stroke="#aaa" />
      <path d="M12 4.500h5M12 7.500h5M12 10.500h5M12 13.500h5M12 16.500h5" stroke="#999" />
      <path d="M39.500 1.500h8v17h-8zM41 8l5-5" fill="#fff" stroke="#52b985" />
      <path d="M39.500 10.500h8M42 12v5h4v-4z" stroke="#52b985" />
    </svg>
  </div>
);

const Group = ({ title, className, children }: { title: string; className: string; children: ReactNode }) => (
  <div className={clsx("relative h-[220px] border border-[#dcdcdc]", className)}>
    <span className="absolute -top-[9px] left-[5px] bg-[#f0f0f0] px-[2px] leading-[18px]">{title}</span>
    {children}
  </div>
);

const dots = Array.from({ length: 15 }, (_, i) => 4 + i * 10.350);

const Preview = () => (
  <svg viewBox="0 0 153 155" className="block h-[155px] w-[153px] bg-[#868686]" fill="none">
    <path d="M14 14h127v127H14z" fill="#12b0ec" />
    <clipPath id="area"><path d="M14 14h127v127H14z" /></clipPath>
    <g clipPath="url(#area)" stroke="#4ba3c4" strokeWidth=".8" strokeOpacity=".8">
      {Array.from({ length: 25 }, (_, i) => (
        <path key={i} d={`M${i * 11 - 120} 142l128-128`} />
      ))}
    </g>
    <g fill="#ddd">
      {dots.map((p) => (
        <g key={p}>
          <rect x={p} y="5.500" width="1" height="1" />
          <rect x={p} y="151" width="1" height="1" />
          <rect x="4" y={p + 1} width="1" height="1" />
          <rect x="149" y={p + 1} width="1" height="1" />
        </g>
      ))}
      <path d="M76 26h1v1h-1zM76 37h1v1h-1zM76 57h1v1h-1zM76 78h1v1h-1zM76 89h1v1h-1zM76 130h1v1h-1z" />
      <path d="M24 57h1v1h-1zM65 67h1v1h-1zM87 67h1v1h-1zM138 67h1v1h-1z" />
    </g>
    <g stroke="#444" strokeDasharray="1 3">
      <path d="M14.500 0v14M118.500 0v14M118.500 141v14M0 37.500h14M141 37.500h12M36 141.500h117" />
    </g>
    <g fill="#1a5f7d">
      <path d="M118 20h1v1h-1zM118 87h1v1h-1zM118 108h1v1h-1zM118 135h1v1h-1zM56 37h1v1h-1zM87 37h1v1h-1zM104 37h1v1h-1z" />
    </g>
    <path d="M14.500 122v33M0 141.500h34" stroke="#e0102a" strokeWidth="1.200" />
  </svg>
);

const Dialog = () => (
  <div className="absolute top-[244px] left-[448px] flex h-[305px] w-[412px] flex-col border border-[#a5136f] bg-[#f0f0f0] text-[10.300px] tracking-[-0.360px] text-[#222] shadow-[0_4px_14px_rgba(0,0,0,0.5)]">
    <div className="flex h-[28px] shrink-0 items-center bg-[#ab006c] pl-[7px] text-[#f7c9e4]">
      <CadLogo className="size-[16px]" color="#d3ac55" bar="#8a2c55" />
      <span className="ml-[4px] text-[11px] tracking-[-0.280px]">Escoger Atributos de Sombreado</span>
      <span className="ml-auto text-[13px]">?</span>
      <svg viewBox="0 0 10 10" className="mr-[17px] ml-[34px] size-[10px]">
        <path d="M0 0l10 10M10 0L0 10" stroke="#f7c9e4" strokeWidth="1.200" />
      </svg>
    </div>
    <div className="flex gap-[6px] pt-[16px] pl-[10px]">
      <Group title="Patrón" className="w-[192px] pt-[39px] pl-[10px]">
        <div className="flex h-[13px] items-center gap-[4px]">
          <span className="size-[13px] border border-[#444] bg-white" />
          <span className="pt-[2px] tracking-[-0.450px]">Relleno sólido</span>
        </div>
        <div className="mt-[27px] flex h-[19px] w-[170px] items-center border border-[#a9b3bd] bg-[#e1e1e1] pr-[4px] pl-[3px]">
          <span className="pt-[3px]">ansi31</span>
          <Caret className="ml-auto" />
        </div>
        <div className="mt-[26px] flex h-[19px] items-center">
          <span className="w-[41px] pt-[3px]">Escala:</span>
          <div className="flex h-full w-[129px] items-center border border-[#1b7fa5] bg-white pt-[2px] pl-[2px] tracking-[0.100px]">0.5</div>
        </div>
        <div className="mt-[26px] flex h-[19px] items-center">
          <span className="w-[41px] pt-[3px]">Angulo:</span>
          <div className="flex h-full w-[129px] items-center border border-[#7a7a7a] bg-white pt-[2px] pl-[2px]">0</div>
        </div>
      </Group>
      <Group title="Previsualización" className="w-[192px] pt-[18px] pl-[10px]">
        <div className="flex h-[13px] items-center gap-[4px]">
          <svg viewBox="0 0 12 12" className="size-[12px]">
            <path d="M.5.500h11v11H.5z" fill="#fff" stroke="#444" />
            <path d="M2.500 6l2.500 2.500 4.500-5" fill="none" stroke="#222" />
          </svg>
          <span className="pt-[2px]">Activar previsualización</span>
        </div>
        <div className="mt-[7px] flex">
          <Preview />
          <div className="flex w-[16px] flex-col items-center">
            <Chevron dir="up" className="mt-[4px] size-[9px]" />
            <div className="mt-[56px] h-[17px] w-[13px] bg-[#c9c9c9]" />
            <Chevron dir="down" className="mt-auto mb-[2px] size-[9px]" />
          </div>
        </div>
        <div className="flex h-[15px] w-[153px] items-center px-[3px]">
          <Chevron dir="left" />
          <div className="ml-[56px] h-[14px] w-[17px] bg-[#c9c9c9]" />
          <Chevron dir="right" className="ml-auto size-[9px]" />
        </div>
      </Group>
    </div>
    <div className="mt-[8px] flex justify-end gap-[7px] pr-[11px] text-center">
      <div className="h-[20px] w-[69px] border-2 border-[#1a73b8] bg-[#e1e1e1] leading-[17px]">OK</div>
      <div className="h-[20px] w-[69px] border border-[#adadad] bg-[#e1e1e1] leading-[19px]">Cancel</div>
    </div>
    <svg viewBox="0 0 12 18" className="absolute top-[162px] left-[98px] h-[18px] w-[12px]">
      <path d="M1 1v14l3.500-3L7 17.500l2.500-1L7.200 11H11z" fill="#fff" stroke="#222" />
    </svg>
  </div>
);

const Task = ({ label, active, className, children }: { label: string; active?: boolean; className: string; children: ReactNode }) => (
  <div className={clsx("flex h-full items-center border-b-[3px] border-[#d65aa8] pt-[2px] text-[12px] tracking-[-0.550px] whitespace-nowrap text-[#f0f0f0]", active && "bg-[#6b706e]", className)}>
    {children}
    <span>{label}</span>
  </div>
);

const Taskbar = () => (
  <div className="flex h-[37px] shrink-0 items-center bg-[#3e4442]">
    <div className="flex h-full w-[45px] items-center justify-center bg-[#1c1c1c]">
      <svg viewBox="0 0 16 16" className="size-[16px]" fill="#fff">
        <path d="M0 2.200l7-1v6.300H0zM8 1l8-1v7.500H8zM0 8.500h7v6.300l-7-1zM8 8.500h8V16l-8-1z" />
      </svg>
    </div>
    <div className="flex h-full w-[321px] items-center bg-[#f1f1f1] pt-px pl-[11px] text-[13.500px] tracking-[-0.150px] text-[#444]">
      <svg viewBox="0 0 16 16" className="mr-[10px] size-[16px]" fill="none" stroke="#222" strokeWidth="1.300">
        <circle cx="10" cy="6" r="5" />
        <path d="M6.500 9.500L1 15" />
      </svg>
      Escribe aquí para buscar
    </div>
    <svg viewBox="0 0 160 30" className="ml-[15px] h-[30px] w-[156px] shrink-0" preserveAspectRatio="xMinYMid meet">
      <path d="M2 8v3h9V8M2 22v-3h9v3M2 12.500h9v5H2zM14.500 8v14" fill="none" stroke="#eee" strokeWidth="1.300" />
      <path d="M13 12h3v3h-3z" fill="#fff" />
      <ellipse cx="55" cy="13" rx="11" ry="7" fill="#f4e8e8" stroke="#c9474c" strokeWidth="1.500" transform="rotate(-20 55 13)" />
      <path d="M49 12l8 3M59 10l-4 4" stroke="#a88" />
      <path d="M58 15l8 5M62 15l1 9" stroke="#2c7fb5" strokeWidth="2" />
      <circle cx="100" cy="15" r="11" fill="#1b93d2" />
      <g fill="none" stroke="#fff" strokeWidth="1.500">
        <circle cx="100" cy="15" r="3.500" />
        <circle cx="93.500" cy="15" r="2" />
        <circle cx="106.500" cy="15" r="2" />
      </g>
      <path d="M134 9c1-2 2-3 3-3l1 3c2-2 5-1 6-6 6 3 10 8 9 14a10 10 0 0 1-20 0c0-3 0-5 1-8z" fill="#ff8a1e" />
      <path d="M144 3c6 3 10 8 9 13-2-4-5-4-7-6-2-1-3-4-2-7z" fill="#ffd43b" />
      <path d="M134 19a10 10 0 0 0 18 2c-5 3-13 3-18-2z" fill="#f0314a" />
      <circle cx="143.500" cy="15.500" r="4.500" fill="#6b3bc4" />
    </svg>
    <Task label="Videos" className="ml-[10px] w-[112px] pl-[8px]">
      <svg viewBox="0 0 14 26" className="mr-[9px] h-[26px] w-[14px]">
        <path d="M1 4h9v18H1z" fill="#f5d673" />
        <path d="M9 13h4v9H9z" fill="#e7b94a" />
      </svg>
    </Task>
    <Task label="WhatsApp - ..." className="ml-[8px] w-[112px] pl-[5px]">
      <svg viewBox="0 0 20 20" className="mr-[5px] size-[21px]">
        <circle cx="10" cy="10" r="10" fill="#2fa84f" />
        <path d="M1.300 5A10 10 0 0 1 18.700 5L10 10z" fill="#e04334" />
        <path d="M18.700 5A10 10 0 0 1 10 20l4-8V5z" fill="#fccb2d" />
        <circle cx="10" cy="10" r="4.600" fill="#fff" />
        <circle cx="10" cy="10" r="3.600" fill="#4285f4" />
      </svg>
    </Task>
    <Task label="OBS 26.0.2 (6..." className="ml-[8px] w-[112px] pl-[4px] tracking-[-0.800px]">
      <svg viewBox="0 0 22 22" className="mr-[4px] size-[23px]">
        <circle cx="11" cy="11" r="10" fill="#151515" stroke="#ddd" strokeWidth="1.200" />
        <path d="M9 4c-3 3-1 7 2 7 4-1 6 1 5 4M11 11c-1 4-4 5-7 3M11 11c1-3 4-4 6-2" fill="none" stroke="#ddd" strokeWidth="2.200" />
      </svg>
    </Task>
    <Task label="LibreCAD - [....." active className="ml-[3px] w-[118px] pl-[8px]">
      <CadLogo className="mr-[3px] size-[23px]" color="#8bd63a" />
    </Task>
    <div className="flex h-full flex-1 items-center bg-gradient-to-r from-[#3a3f3d] to-[#161616]">
      <svg viewBox="0 0 110 20" className="ml-[7px] h-[20px] w-[110px] shrink-0" fill="none" stroke="#eee" strokeWidth="1.200">
        <path d="M2 12l5-5 5 5" strokeWidth="1.500" />
        <path d="M26 3q3-2 6 0v9q-3 2-6 0z" fill="#eee" />
        <path d="M24.500 10q0 5 4.500 5t4.500-5M29 15v4" />
        <path d="M48 6h11v8H48zM60 8.500v3M45 4v4h4V4M47 8v4" />
        <path d="M50 8h7v4h-7z" fill="#eee" />
        <path d="M71 16a11 11 0 0 1 10-11M74 16a8 8 0 0 1 7-7M77 16a5 5 0 0 1 4-4" stroke="#aaa" />
        <path d="M89 8h2l3-3v10l-3-3h-2zM96.500 7.500q2 2.500 0 5M99 6q3 4 0 8M101.500 4.500q4 5.500 0 11" strokeWidth="1" />
      </svg>
      <span className="ml-[5px] text-[11px] tracking-[-0.600px] text-white">ESP</span>
      <div className="ml-[10px] w-[56px] text-center text-[11.500px] leading-[17px] tracking-[-0.650px] whitespace-nowrap text-white">
        <div>16:35</div>
        <div>20/10/2020</div>
      </div>
      <svg viewBox="0 0 18 20" className="ml-[14px] h-[20px] w-[18px] shrink-0">
        <path d="M1 1h14v12H9l-3 4v-4H1z" fill="#fff" />
        <path d="M3 4.500h10M3 7.500h10M3 10.500h6" stroke="#333" />
        <circle cx="13" cy="14" r="3.500" fill="#222" stroke="#fff" />
      </svg>
      <div className="mr-[4px] ml-auto h-full w-px bg-[#666]" />
    </div>
  </div>
);

const App = () => (
  <div className="relative flex h-[720px] w-[1280px] flex-col overflow-hidden border-x border-black bg-[#efefef] font-['Noto_Sans','Open_Sans',sans-serif]">
    <TitleBar />
    <MenuBar />
    <Toolbars />
    <div className="flex h-[489px] shrink-0">
      <SideColumn carets className="w-[32px]" names="cLine cCircle cCurve cEllipse cPoly cSelect dimA rotate measure" />
      <SideColumn className="w-[33px]" names="pline nodeAdd nodeApp nodeDel nodeSeg nodeTrim nodePar nodeOut" />
      <SideColumn className="w-[33px]" names="dimAl dimLin dimA dimV dimRad dimDia dimAng leader" />
      <Canvas />
      <Docks />
    </div>
    <BottomBar />
    <Taskbar />
    <Dialog />
  </div>
);

export default App;
